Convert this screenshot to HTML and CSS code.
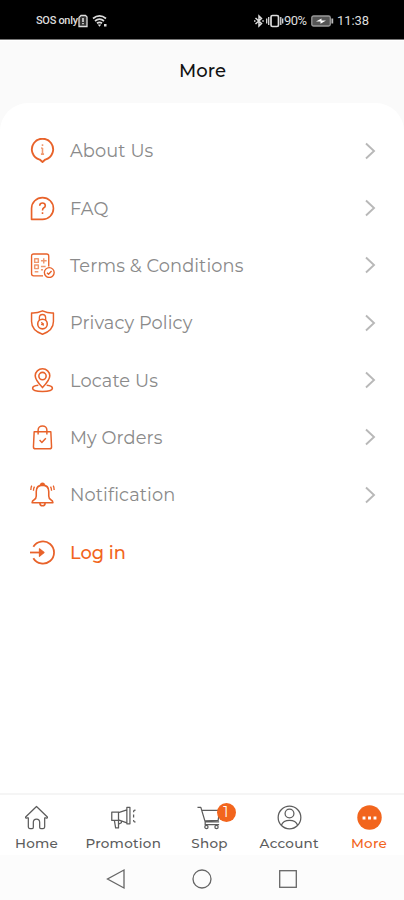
FILE: index.html
```html
<!DOCTYPE html>
<html lang="en">
<head>
<meta charset="utf-8">
<title>More</title>
<link rel="stylesheet" href="styles.css">
</head>
<body>
<div class="status">
  <div class="status-left">
    <span class="sos">SOS only</span>
    <svg width="10" height="14" viewBox="0 0 10 14"><path d="M3 1.500h4.500l1.500 1.500v9.500H1v-9z" fill="#333" stroke="#ddd" stroke-width="1.300"/><path d="M5 4v4M5 9v1.300" stroke="#fff" stroke-width="1.300"/></svg>
    <svg class="wifi" width="16" height="14" viewBox="0 0 16 14"><path d="M1 4.500Q7.500-.8 14 4.500M3 7Q7.500 3.300 12 7M5 9.300Q7.500 7.500 10 9.300" fill="none" stroke="#ddd" stroke-width="1.700"/><path d="M5.700 10.500h3.600l-1.800 2.300zM12 10h2.500v2.500H12z" fill="#ddd"/></svg>
  </div>
  <div class="status-right">
    <svg width="10" height="14" viewBox="0 0 10 14"><path d="M1.500 4l6 5.500L5 12V2l2.500 2.500-6 5.500" fill="none" stroke="#ddd" stroke-width="1.500"/><path d="M0 6.300h1.500v1.500H0zM8.300 6.300h1.500v1.500H8.300z" fill="#ddd"/></svg>
    <svg class="vibrate" width="18" height="14" viewBox="0 0 18 14"><rect x="5" y="1.500" width="7.500" height="11" rx="1.500" fill="none" stroke="#ddd" stroke-width="1.700"/><path d="M2.700 3v8M14.800 3v8M.7 4.500v5M16.700 4.500v5" stroke="#ddd" stroke-width="1.300"/></svg>
    <span class="percent">90%</span>
    <svg class="battery" width="23" height="12" viewBox="0 0 23 12"><rect x=".8" y="1" width="18.500" height="10" rx="1.800" fill="#555" stroke="#999" stroke-width="1.300"/><path d="M21.300 3.500v5" stroke="#bbb" stroke-width="1.800"/><path d="M5 6.500l5.500-3v2h4.500l-5.500 3.200V6.500z" fill="#fff"/></svg>
    <span class="clock">11:38</span>
  </div>
</div>
<header><h1>More</h1></header>
<main>
  <ul class="menu">
    <li><svg class="ic" viewBox="0 0 24 24"><path d="M12 23L9.300 20.700A10.200 10.200 0 1 1 14.700 20.700Z" stroke-width="1.800"/><path class="faint" d="M12 9.500v6M10.700 9.700H12M10.500 15.500h3M12 6v1.700" stroke-width="1.500"/></svg><span class="label">About Us</span><svg class="chev" viewBox="0 0 12 18"><path d="M2 1.500L10 9l-8 7.500"/></svg></li>
    <li><svg class="ic" viewBox="0 0 24 24"><path d="M1.500 22.500V12A10.500 10.500 0 1 1 12 22.500Z" stroke-width="1.600"/><path d="M9.300 9.300Q9.500 6.800 12 6.800T14.700 9.300Q14.700 10.600 13 11.500 12 12.100 12 13.800M12 15.500v1.700" stroke-width="1.500"/></svg><span class="label">FAQ</span><svg class="chev" viewBox="0 0 12 18"><path d="M2 1.500L10 9l-8 7.500"/></svg></li>
    <li><svg class="ic" viewBox="0 0 24 24"><path d="M12.500 22H3.500Q1.500 22 1.500 20V3Q1.500 1 3.500 1h12.500Q18 1 18 3v10" stroke-width="1.300"/><path class="faint" d="M4.500 5.500H8v3.500H4.500zM4.500 11.500H8V15H4.500zM4.500 18H8M10.500 7.500h5.500M13.200 5v5M10.500 13h4.500M10.500 16h2" stroke-width="1.400"/><circle cx="18.500" cy="18.800" r="4.700" stroke-width="1.300"/><path d="M16.300 18.900l1.500 1.500 2.900-3.100" stroke-width="1.300"/></svg><span class="label">Terms &amp; Conditions</span><svg class="chev" viewBox="0 0 12 18"><path d="M2 1.500L10 9l-8 7.500"/></svg></li>
    <li><svg class="ic" viewBox="0 0 24 24"><path d="M12 .8Q6.500 3.200 1.500 2.800V11Q1.500 19.500 12 23.300 22.500 19.500 22.500 11V2.800Q17.500 3.200 12 .8Z" stroke-width="1.400"/><circle cx="12" cy="13.500" r="4.600" stroke-width="1.500"/><path d="M9 9.500V7.300a3 3 0 0 1 6 0v2.200M11 11.700l2 3.300M10.700 14l2.600-1" stroke-width="1.300"/></svg><span class="label">Privacy Policy</span><svg class="chev" viewBox="0 0 12 18"><path d="M2 1.500L10 9l-8 7.500"/></svg></li>
    <li><svg class="ic" viewBox="0 0 24 24"><path d="M12 18.800Q5 11.500 5 7.500a7 6.700 0 0 1 14 0Q19 11.500 12 18.800Z" stroke-width="1.500"/><circle cx="12" cy="7.700" r="3.500" stroke-width="1.500"/><path d="M8 16.500Q2.500 16.800 2.500 19.500 2.500 22.500 12 22.500T21.500 19.500Q21.500 16.800 16 16.500" stroke-width="1.500"/></svg><span class="label">Locate Us</span><svg class="chev" viewBox="0 0 12 18"><path d="M2 1.500L10 9l-8 7.500"/></svg></li>
    <li><svg class="ic" viewBox="0 0 24 24"><path d="M4 6.500h16L20.700 21Q20.700 22.800 18.700 22.800H5.300Q3.300 22.800 3.300 21Z" stroke-width="1.400"/><path d="M7.800 9V4.800a4.200 3.900 0 0 1 8.400 0V9M9.200 14.500l2.200 2.200 3.800-4" stroke-width="1.400"/></svg><span class="label">My Orders</span><svg class="chev" viewBox="0 0 12 18"><path d="M2 1.500L10 9l-8 7.500"/></svg></li>
    <li><svg class="ic" viewBox="0 0 24 24"><path d="M12 3Q6 3.200 6 9v4.500Q6 16 4 17T2 20h20Q22 18 20 17T18 13.500V9Q18 3.200 12 3ZM10.300 3a1.700 1.700 0 0 1 3.400 0M9.500 20.300a2.500 2.500 0 0 0 5 0" stroke-width="1.500"/><path d="M4.300 4.500Q3.300 6 3.300 8.500M1.700 3.500Q.8 5 .8 7.700M19.700 4.500q1 1.500 1 4M22.300 3.500q.9 1.500.9 4.200" stroke-width="1.300"/></svg><span class="label">Notification</span><svg class="chev" viewBox="0 0 12 18"><path d="M2 1.500L10 9l-8 7.500"/></svg></li>
    <li><svg class="ic" viewBox="0 0 24 24"><path d="M3.200 6.500A10.700 10.700 0 1 1 3.200 17.500" stroke-width="1.700"/><path d="M0 12h12" stroke-width="1.700"/><path d="M9 8.300L13.500 12 9 15.700z" fill="#e8622a" stroke-width="1"/></svg><span class="label login">Log in</span></li>
  </ul>
</main>
<nav>
  <a class="tab home"><svg viewBox="0 0 26 26"><path d="M13 1.500L1.700 12.500Q1.200 13.800 3.300 13.500H4.500V23q0 1.500 1.500 1.500h2.500q1.200 0 1.200-1.300V18a3.300 3.300 0 0 1 6.600 0v5.200q0 1.300 1.200 1.300H20q1.500 0 1.500-1.500v-9.500h1.200q2.100.3 1.600-1Z"/></svg><span>Home</span></a>
  <a class="tab promo"><svg viewBox="0 0 26 26"><path d="M.8 7.500h7V16h-7zM7.800 8L16.500 5v13.500L7.800 15.500M16.500 2.500h3.200V19.500h-3.200zM3.500 16l1.300 7.800h3V16M7.800 20l3-1.500v-2M25.500 5.500Q23.500 5 23.500 7.500M23.500 10v3M25.500 17.500Q23.500 18 23.500 15.500"/></svg><span>Promotion</span></a>
  <a class="tab shop"><svg viewBox="0 0 26 26"><path d="M.5 2.500H4l4.500 15H23M5.500 5.500h18l-1.500 10.500L8.500 16.500M8.500 17.500v3H23"/><circle cx="9.800" cy="22.800" r="1.700"/><circle cx="20.300" cy="22.800" r="1.700"/></svg><span>Shop</span><b class="badge">1</b></a>
  <a class="tab account"><svg viewBox="0 0 26 26"><circle cx="13" cy="13" r="11.800"/><circle cx="13" cy="8.800" r="4.600"/><path d="M4.500 21Q6.500 16 13 16t8.500 5"/></svg><span>Account</span></a>
  <a class="tab more"><svg viewBox="0 0 26 26"><circle class="disc" cx="13" cy="13" r="12.700"/><path class="dots" d="M5.800 12h3v3h-3zM11.500 12h3v3h-3zM17.200 12h3v3h-3z"/></svg><span>More</span></a>
</nav>
<footer>
  <svg viewBox="0 0 22 22"><path d="M19 2v18L2.500 11z"/></svg>
  <svg viewBox="0 0 22 22"><circle cx="11" cy="11" r="9"/></svg>
  <svg viewBox="0 0 22 22"><rect x="2.700" y="2.700" width="16.600" height="16.600"/></svg>
</footer>
</body>
</html>
```
FILE: styles.css
```css
* { box-sizing: border-box; }
body {
  margin: 0;
  width: 404px;
  height: 900px;
  display: flex;
  flex-direction: column;
  background: #fafafa;
  font-family: Montserrat, Inter, sans-serif;
  overflow: hidden;
}
svg { display: block; flex: none; }
.status {
  height: 40px;
  flex: none;
  background: #000;
  border-bottom: 1px solid #777;
  color: #ddd;
  display: flex;
  justify-content: space-between;
  align-items: center;
  padding: 2px 36px 0 36px;
  font-family: Roboto, sans-serif;
}
.status-left, .status-right { display: flex; align-items: center; }
.sos { font-size: 11px; width: 42px; white-space: nowrap; letter-spacing: -.3px; font-weight: 500; }
.wifi { margin-left: 4px; }
.vibrate { margin-left: 2px; }
.percent { font-size: 13px; width: 25px; letter-spacing: -.5px; }
.battery { margin: 0 3px 0 2px; }
.clock { font-size: 13px; width: 31px; letter-spacing: -.1px; white-space: nowrap; }
header { height: 63px; flex: none; display: flex; justify-content: center; align-items: center; border-top: 1px solid #fff; padding: 0 0 2px 1px; }
h1 { margin: 0; font-size: 18px; font-weight: 500; color: #111; }
main { flex: 1; background: #fff; border-radius: 28px 28px 0 0; padding-top: 19px; }
.menu { margin: 0; padding: 0 28px 0 30px; list-style: none; }
.menu li { height: 57.35px; display: flex; align-items: center; }
.ic { width: 25px; height: 25px; fill: none; stroke: #e8622a; stroke-linejoin: round; }
.faint { stroke: #f0986f; }
.label { margin-left: 15px; flex: 1; font-size: 17.8px; font-weight: 400; letter-spacing: .1px; color: #8a8a8a; white-space: nowrap; }
.login { color: #f2651d; font-weight: 500; letter-spacing: 0; }
.chev { width: 12px; height: 18px; fill: none; stroke: #b8b8b8; stroke-width: 1.9; }
nav {
  height: 62px;
  flex: none;
  background: #fff;
  border-top: 2px solid #f5f5f5;
  display: flex;
  justify-content: space-between;
  padding: 10px 17px 0 15px;
}
.tab { position: relative; display: flex; flex-direction: column; align-items: center; color: #5c5c5c; font-size: 13.5px; font-weight: 500; line-height: 18px; letter-spacing: .25px; white-space: nowrap; }
.tab svg { width: 25px; height: 25px; margin-bottom: 4px; fill: none; stroke: #5c5c5c; stroke-width: 1.3; stroke-linejoin: round; }
.home { width: 43px; }
.promo { width: 75px; margin-left: -4px; }
.shop { width: 36px; margin-left: -1px; }
.account { width: 60px; }
.more { width: 36px; color: #f2651d; }
.more .disc { fill: #f2651d; stroke: none; }
.more .dots { fill: #fff; stroke: none; }
.badge { position: absolute; left: 25px; top: -2px; width: 19px; height: 19px; border-radius: 50%; background: #f2651d; color: #fff; font-size: 14px; font-weight: 400; text-align: center; line-height: 19px; }
footer { height: 45px; flex: none; background: #fcfcfc; display: flex; justify-content: center; gap: 64px; padding: 13px 0 0; }
footer svg { width: 22px; height: 22px; fill: none; stroke: #666; stroke-width: 1.3; }
```
